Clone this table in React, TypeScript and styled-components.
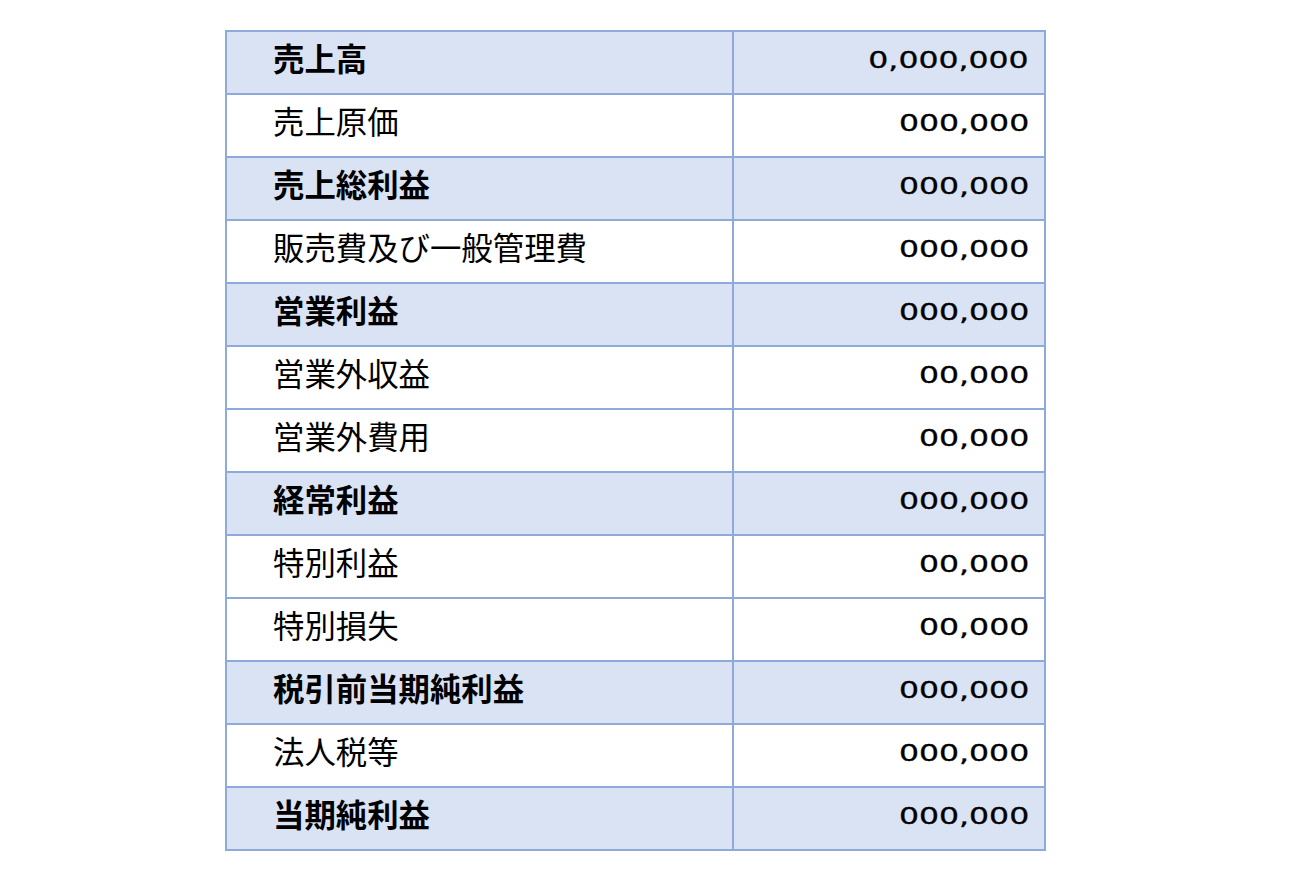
import React from 'react';
import styled, { createGlobalStyle } from 'styled-components';

const GlobalStyle = createGlobalStyle`
   html, body {
      margin: 0;
      padding: 0;
      background: #ffffff;
   }
   body {
      font-family: "Noto Sans CJK JP", "Noto Sans", sans-serif;
      color: #000000;
   }
`;

const border = '#8eaadb';
const shade = '#dae3f3';

type Row = { label: string; value: string; total?: boolean };

const rows: Row[] = [
   { label: '売上高', value: '0,000,000', total: true },
   { label: '売上原価', value: '000,000' },
   { label: '売上総利益', value: '000,000', total: true },
   { label: '販売費及び一般管理費', value: '000,000' },
   { label: '営業利益', value: '000,000', total: true },
   { label: '営業外収益', value: '00,000' },
   { label: '営業外費用', value: '00,000' },
   { label: '経常利益', value: '000,000', total: true },
   { label: '特別利益', value: '00,000' },
   { label: '特別損失', value: '00,000' },
   { label: '税引前当期純利益', value: '000,000', total: true },
   { label: '法人税等', value: '000,000' },
   { label: '当期純利益', value: '000,000', total: true },
];

const Page = styled.div`
   display: flex;
   justify-content: flex-start;
   padding: 30px 0 0 225px;
`;

const Statement = styled.div`
   display: grid;
   grid-template-columns: 505px 310px;
   grid-auto-rows: 61px;
   gap: 2px;
   padding: 2px;
   background: ${border};
`;

const Cell = styled.div<{ $total?: boolean }>`
   display: flex;
   align-items: center;
   background: ${({ $total }) => ($total ? shade : '#ffffff')};
   box-sizing: border-box;
`;

const LabelCell = styled(Cell)`
   padding: 0 0 10px 46px;
`;

const ValueCell = styled(Cell)`
   justify-content: flex-end;
   padding: 0 15px 3px 0;
`;

const Label = styled.span<{ $total?: boolean }>`
   font-size: 31.4px;
   line-height: 1;
   font-weight: ${({ $total }) => ($total ? 700 : 400)};
   white-space: nowrap;
`;

const Amount = styled.span`
   display: inline-block;
   font-family: "DejaVu Sans", sans-serif;
   font-size: 23.5px;
   line-height: 1;
   transform: scaleX(1.34);
   transform-origin: right center;
   -webkit-text-stroke: 0.3px #000;
   white-space: nowrap;
`;

export default function App() {
   return (
      <>
         <GlobalStyle />
         <Page>
            <Statement>
               {rows.map((r) => (
                  <React.Fragment key={r.label}>
                     <LabelCell $total={r.total}>
                        <Label $total={r.total}>{r.label}</Label>
                     </LabelCell>
                     <ValueCell $total={r.total}>
                        <Amount>{r.value}</Amount>
                     </ValueCell>
                  </React.Fragment>
               ))}
            </Statement>
         </Page>
      </>
   );
}
